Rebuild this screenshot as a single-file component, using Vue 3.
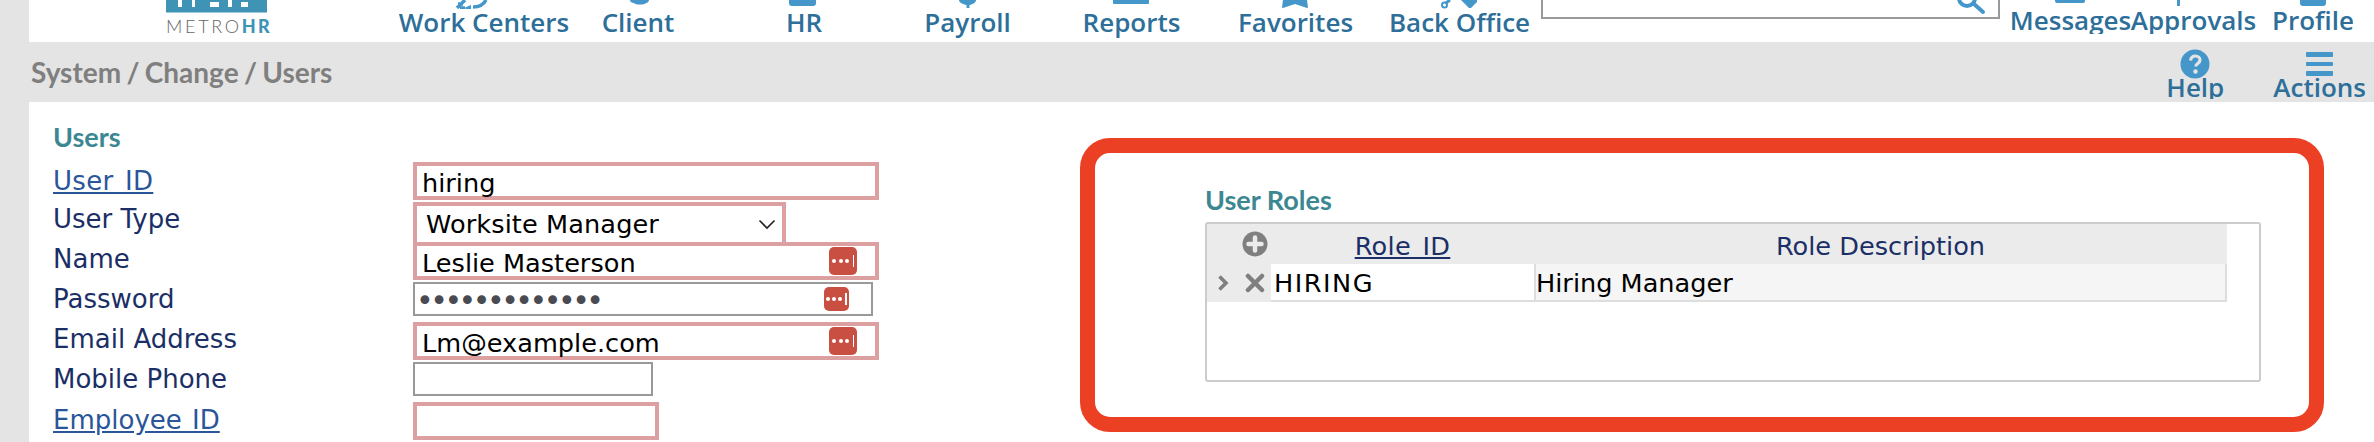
<template>
  <div class="page">
    <header class="topbar">
      <div class="logo">
        <svg width="101" height="13" viewBox="0 0 101 13">
          <path fill="#3f93b5" fill-rule="evenodd" d="M0 0h101v12.500H0zM12 0v7h4V0zM26 0v7h3V0zM44 2v5h9V2zM62 0v7h4V0zM75 2v5h7V2z" />
        </svg>
        <div class="logo-text">METRO<b>HR</b></div>
      </div>
      <nav class="nav">
        <a v-for="item in navLeft" :key="item.label" class="nav-item" :style="{ width: item.w + 'px' }">
          <svg class="nav-icon" :width="item.w" height="9" :viewBox="`0 0 ${item.w} 9`" v-html="item.icon"></svg>
          <span>{{ item.label }}</span>
        </a>
      </nav>
      <div class="search">
        <svg width="32" height="16" viewBox="0 0 32 16">
          <circle cx="12" cy="-2" r="8" fill="none" stroke="#4596c9" stroke-width="4" />
          <path d="M19 4l9 8" stroke="#4596c9" stroke-width="4" stroke-linecap="round" />
        </svg>
      </div>
      <nav class="nav nav-right">
        <a v-for="item in navRight" :key="item.label" class="nav-item" :style="{ width: item.w + 'px' }">
          <svg class="nav-icon" :width="item.w" height="7" :viewBox="`0 0 ${item.w} 7`" v-html="item.icon"></svg>
          <span>{{ item.label }}</span>
        </a>
      </nav>
    </header>

    <div class="crumbs">
      <div class="crumb-text">System / Change / Users</div>
      <div class="crumb-actions">
        <a class="crumb-btn help">
          <svg width="30" height="30" viewBox="0 0 30 30">
            <circle cx="15" cy="15" r="14.500" fill="#4596c9" />
            <path d="M10.500 11.500c.5-3 2.500-4.500 4.800-4.500 2.700 0 4.700 1.700 4.700 4 0 3.500-4.300 3.500-4.300 6.500" fill="none" stroke="#e4e4e4" stroke-width="3.200" />
            <circle cx="15.500" cy="22.500" r="2.200" fill="#e4e4e4" />
          </svg>
          <span class="btn-label">Help</span>
        </a>
        <a class="crumb-btn actions">
          <span class="burger"><i></i><i></i><i></i></span>
          <span class="btn-label">Actions</span>
        </a>
      </div>
    </div>

    <main class="content">
      <section class="form">
        <h2>Users</h2>
        <div class="row r-userid">
          <a class="lbl link">User ID</a>
          <div class="field req w-full">hiring</div>
        </div>
        <div class="row r-type">
          <span class="lbl up-lg">User Type</span>
          <div class="field req w-select">
            <span>Worksite Manager</span>
            <svg width="18" height="11" viewBox="0 0 18 11"><path d="M1.500 1.500L9 9l7.500-7.500" fill="none" stroke="#222" stroke-width="1.600" /></svg>
          </div>
        </div>
        <div class="row">
          <span class="lbl up-sm">Name</span>
          <div class="field req w-full">
            Leslie Masterson
            <span class="dots-btn"><i></i><i></i><i></i><b></b></span>
          </div>
        </div>
        <div class="row r-pass">
          <span class="lbl">Password</span>
          <div class="field plain w-pass">
            <span class="bullets">•••••••••••••</span>
            <span class="dots-btn small"><i></i><i></i><i></i><b></b></span>
          </div>
        </div>
        <div class="row r-email">
          <span class="lbl up-sm">Email Address</span>
          <div class="field req w-full">
            Lm@example.com
            <span class="dots-btn"><i></i><i></i><i></i><b></b></span>
          </div>
        </div>
        <div class="row r-mobile">
          <span class="lbl">Mobile Phone</span>
          <div class="field plain w-mobile"></div>
        </div>
        <div class="row r-emp">
          <a class="lbl link emp-link">Employee ID</a>
          <div class="field req w-emp"></div>
        </div>
      </section>

      <section class="callout">
        <h2>User Roles</h2>
        <div class="grid-box">
          <div class="grid-head">
            <div class="gutter">
              <svg width="26" height="26" viewBox="0 0 26 26">
                <circle cx="13" cy="13" r="12.500" fill="#7f7f7f" />
                <path d="M13 6.500v13M6.500 13h13" stroke="#ebebeb" stroke-width="4.500" stroke-linecap="round" />
              </svg>
            </div>
            <a class="col-id head-link">Role ID</a>
            <div class="col-desc head-text">Role Description</div>
          </div>
          <div class="grid-row">
            <div class="gutter gutter-row">
              <svg width="12" height="18" viewBox="0 0 12 18"><path d="M2.500 2.500L9 9l-6.500 6.500" fill="none" stroke="#7f7f7f" stroke-width="3.600" /></svg>
              <svg width="20" height="20" viewBox="0 0 20 20"><path d="M3 3l14 14M17 3L3 17" stroke="#7f7f7f" stroke-width="4.500" stroke-linecap="round" /></svg>
            </div>
            <div class="col-id cell cell-id">HIRING</div>
            <div class="col-desc cell cell-alt">Hiring Manager</div>
          </div>
        </div>
      </section>
    </main>
  </div>
</template>

<script setup>
const blue = '#4596c9'
const navLeft = [
  { label: 'Work Centers', w: 170, icon: `<path d="M58 8l8-8M64 4l-5 0M66 8h-5M74 7c6 0 11-3 13-7" fill="none" stroke="${blue}" stroke-width="3.500"/><path d="M65 8l7-3v6z" fill="${blue}"/>` },
  { label: 'Client', w: 70, icon: `<path d="M27 0h19c0 2-2 3-3 3-1 1-3 1.500-6 1.500S32 4 31 3c-2 0-4-1-4-3z" fill="${blue}"/>` },
  { label: 'HR', w: 34, icon: `<path d="M2 0h27v3q0 3-3 3H5q-3 0-3-3z" fill="${blue}"/>` },
  { label: 'Payroll', w: 85, icon: `<path d="M34 0h17c0 2.500-3 4.500-6.500 5v3h-3V5C38 4.500 34 2.500 34 0z" fill="${blue}"/>` },
  { label: 'Reports', w: 97, icon: `<path d="M30 0h36v3q0 1-1 1H31q-1 0-1-1z" fill="${blue}"/>` },
  { label: 'Favorites', w: 113, icon: `<path d="M44 0h24l1 7.500-1 .5-12-4-12 4-1-.5z" fill="${blue}"/>` },
  { label: 'Back Office', w: 141, icon: `<path d="M72 0h16v2l-6 6-2 0z" fill="${blue}"/><path d="M61 0l-4 3" stroke="${blue}" stroke-width="3"/><circle cx="55.500" cy="5" r="2.500" fill="none" stroke="${blue}" stroke-width="2"/>` }
]
const navRight = [
  { label: 'Messages', w: 121, icon: `<path d="M45 0h30v1q0 2-2 2H47q-2 0-2-2z" fill="${blue}"/>` },
  { label: 'Approvals', w: 125, icon: `<path d="M46 0h3v6h-3z" fill="${blue}"/>` },
  { label: 'Profile', w: 80, icon: `<path d="M27 0h26v3q0 3-3 3H30q-3 0-3-3z" fill="${blue}"/>` }
]
</script>

<style>
html, body { margin: 0; background: #fff; overflow: hidden; }
</style>

<style scoped>
.page {
  width: 2374px;
  height: 442px;
  overflow: hidden;
  background: #e4e4e4;
  padding-left: 29px;
  box-sizing: border-box;
}
.topbar {
  height: 42px;
  background: #fff;
  display: flex;
  overflow: hidden;
}
.logo { margin-left: 137px; width: 102px; flex: none; }
.logo svg { display: block; }
.logo-text {
  margin-top: 5px;
  font: 300 18px/16px Lato, sans-serif;
  letter-spacing: 2.700px;
  color: #666;
  white-space: nowrap;
}
.logo-text b { font-weight: 900; color: #3f93b5; letter-spacing: 2.300px; }
.nav { display: flex; margin-left: 131px; flex: none; }
.nav-item {
  display: flex;
  flex-direction: column;
  align-items: center;
  font: 600 26px/26px "Open Sans", sans-serif;
  color: #2e6f9a;
  white-space: nowrap;
  flex: none;
}
.nav-item:nth-child(1) { margin-right: 34px; }
.nav-item:nth-child(2) { margin-right: 114px; }
.nav-item:nth-child(3) { margin-right: 104px; }
.nav-item:nth-child(4) { margin-right: 73px; }
.nav-item:nth-child(5) { margin-right: 59px; }
.nav-item:nth-child(6) { margin-right: 37px; }
.nav-icon { display: block; flex: none; }
.search {
  width: 459px;
  height: 19px;
  margin-left: 11px;
  border: 2px solid #999;
  border-top: 0;
  box-sizing: border-box;
  display: flex;
  justify-content: flex-end;
  padding-right: 11px;
  flex: none;
}
.nav-right { margin-left: 10px; height: 34px; overflow: hidden; }
.nav-right .nav-item { margin-right: 0; }
.nav-right .nav-item:nth-child(2) { margin-right: 17px; }

.crumbs {
  height: 60px;
  display: flex;
  justify-content: space-between;
  margin-left: -29px;
}
.crumb-text {
  margin: 15px 0 0 31px;
  font: 700 28px/30px Lato, sans-serif;
  word-spacing: -1.500px;
  color: #7f7f7f;
}
.crumb-actions { display: flex; }
.crumb-btn {
  display: flex;
  flex-direction: column;
  align-items: center;
  height: 57px;
  box-sizing: border-box;
  overflow: hidden;
  font: 600 26px/24px "Open Sans", sans-serif;
  color: #2e6f9a;
  white-space: nowrap;
}
.help { margin-right: 49px; padding-top: 7px; }
.help .btn-label { margin-top: -4px; }
.actions { margin-right: 8px; padding-top: 10px; }
.actions .btn-label { margin-top: -1px; }
.burger { display: flex; flex-direction: column; gap: 5px; width: 27px; height: 24px; flex: none; }
.burger i { display: block; height: 4.500px; background: #4596c9; border-radius: 1px; }

.content {
  height: 340px;
  background: #fff;
  display: flex;
  align-items: flex-start;
}
.form { width: 1051px; padding: 20px 0 0 24px; box-sizing: border-box; flex: none; }
h2 {
  margin: 0;
  font: 700 27px/30px Lato, sans-serif;
  color: #3c8791;
}
.row { display: flex; align-items: center; }
.lbl {
  width: 360px;
  flex: none;
  font: 26px/30px "DejaVu Sans", sans-serif;
  color: #1b2f66;
}
.up-lg { margin-bottom: 10px; }
.up-sm { margin-bottom: 4px; }
.link { color: #2a5599; text-decoration: underline; word-spacing: 3px; letter-spacing: .3px; }
.emp-link { margin-bottom: 2px; word-spacing: 2px; letter-spacing: 0; }
.field {
  display: flex;
  align-items: center;
  justify-content: space-between;
  box-sizing: border-box;
  font: 25.600px/30px "DejaVu Sans", sans-serif;
  color: #000;
  background: #fff;
  padding: 3px 0 0 5px;
  position: relative;
}
.req { border: 4px solid #dda0a0; }
.plain { border: 2px solid #999; }
.w-full { width: 466px; height: 38px; }
.w-select { width: 373px; height: 44px; padding: 0 6px 0 9px; letter-spacing: .1px; }
.w-pass { width: 460px; height: 34px; padding: 3px 0 0 1px; }
.w-mobile { width: 240px; height: 34px; }
.w-emp { width: 246px; height: 38px; }
.bullets { color: #4a4a52; font-size: 30px; letter-spacing: -3.500px; line-height: 30px; }
.r-userid { margin-top: 10px; }
.r-type { margin-top: 2px; margin-bottom: -4px; }
.r-pass { margin-top: 2px; }
.r-email { margin-top: 6px; }
.r-mobile { margin-top: 2px; }
.r-emp { margin-top: 6px; }
.dots-btn {
  position: absolute;
  right: 18px;
  top: 1px;
  width: 28px;
  height: 28px;
  background: #c94f43;
  border-radius: 5px;
  display: flex;
  align-items: center;
  justify-content: center;
  gap: 2.500px;
}
.dots-btn i { width: 4px; height: 4px; border-radius: 50%; background: #fff; }
.dots-btn b { width: 1.500px; height: 12px; background: #fff; margin-left: 1px; }
.dots-btn.small { width: 25px; height: 24px; right: 22px; top: 3px; gap: 2px; }

.callout {
  width: 1244px;
  height: 294px;
  margin-top: 36px;
  box-sizing: border-box;
  border: 15px solid #ec4025;
  border-radius: 30px;
  padding: 24px 0 0 110px;
  flex: none;
}
.callout h2 { line-height: 45px; }
.grid-box {
  width: 1056px;
  height: 160px;
  border: 2px solid #ccc;
  border-radius: 3px;
  box-sizing: border-box;
}
.grid-head, .grid-row { display: flex; width: 1020px; }
.grid-head { height: 40px; background: #ebebeb; }
.grid-row { height: 38px; }
.gutter { width: 64px; flex: none; display: flex; align-items: center; padding-left: 35px; box-sizing: border-box; }
.gutter-row {
  background: #ebebeb;
  padding-left: 10px;
  gap: 16px;
}
.col-id { width: 263px; flex: none; }
.col-desc { flex: 1; }
.head-link, .head-text {
  text-align: center;
  font: 25.600px/44px "DejaVu Sans", sans-serif;
  color: #1b2f66;
}
.head-link { text-decoration: underline; word-spacing: 3px; letter-spacing: .3px; }
.cell {
  font: 25.600px/36px "DejaVu Sans", sans-serif;
  color: #000;
  background: #fff;
  padding: 1px 0 0 3px;
  box-sizing: border-box;
  border-bottom: 2px solid #ddd;
}
.cell-id { letter-spacing: 1.500px; }
.cell-alt { background: #f5f5f5; border-left: 2px solid #ddd; border-right: 2px solid #ddd; padding-left: 0; }
</style>
